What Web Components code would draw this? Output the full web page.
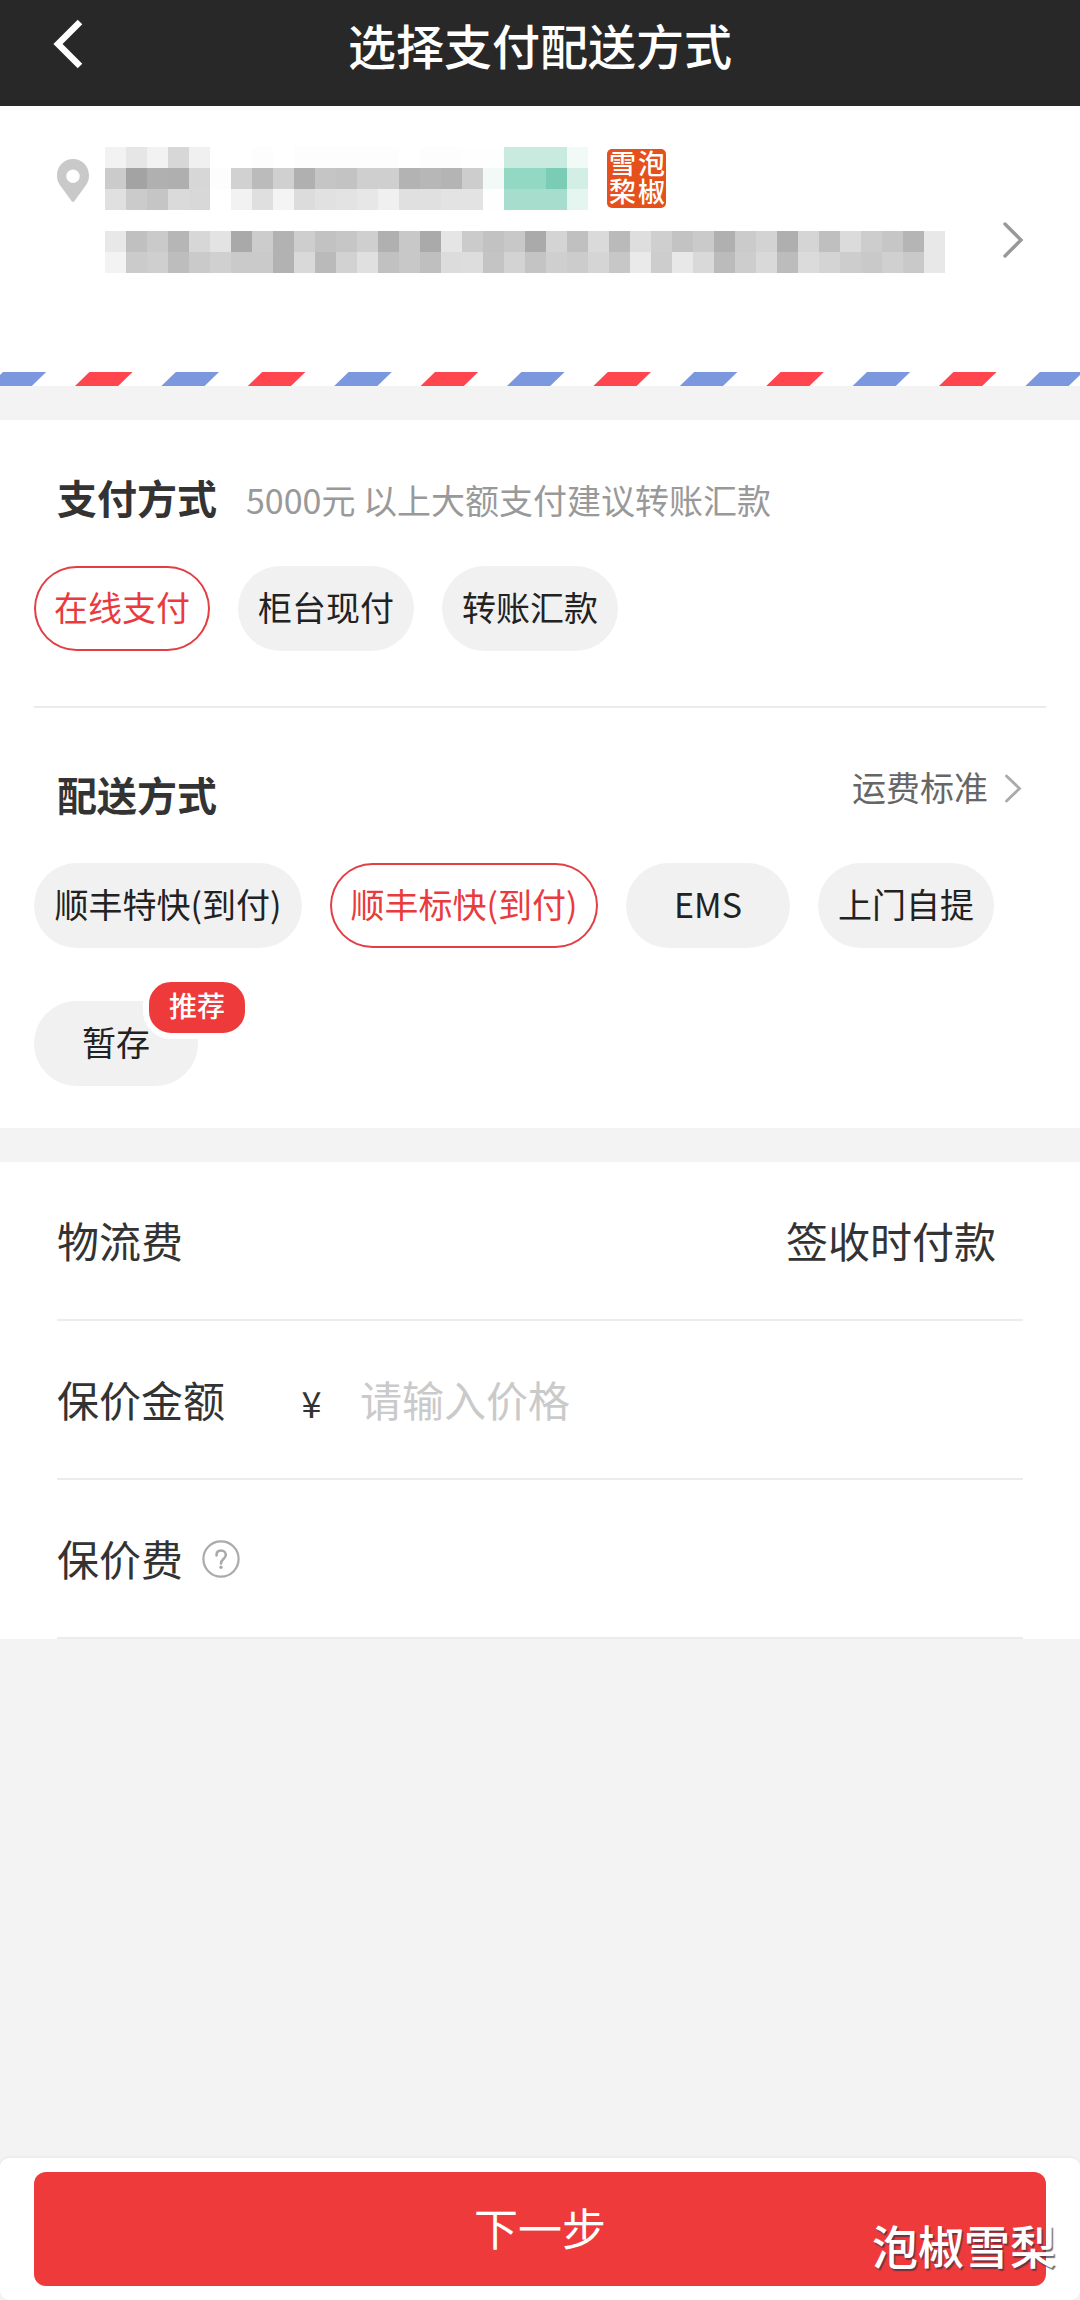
<!DOCTYPE html>
<html lang="zh-CN">
<head>
<meta charset="utf-8">
<title>选择支付配送方式</title>
<style>
html,body{margin:0;padding:0}
body{width:1080px;height:2300px;overflow:hidden;background:#f3f3f3;font-family:"Noto Sans CJK SC",sans-serif;color:#333}
</style>
</head>
<body>
<checkout-page></checkout-page>
<script>
const define = (name, html, setup) => customElements.define(name, class extends HTMLElement {
  connectedCallback() {
    if (this.shadowRoot) return;
    const t = document.createElement('template');
    t.innerHTML = html;
    this.attachShadow({mode: 'open'}).append(t.content.cloneNode(true));
    if (setup) setup(this, this.shadowRoot);
  }
});

define('nav-bar', `
<style>
:host{display:grid;grid-template-columns:120px 1fr 120px;height:106px;background:#282828;color:#fff;box-sizing:border-box;padding-bottom:18px;align-items:center}
svg{display:block;margin-left:50px}
h1{margin:0;font-size:48px;line-height:60px;font-weight:500;text-align:center;white-space:nowrap}
</style>
<svg width="36" height="56" viewBox="0 0 36 56"><path d="M30 6L8 28L30 50" fill="none" stroke="#fff" stroke-width="6.500"/></svg>
<h1><slot></slot></h1>`);

/* Redacted text: rows of 21px cells, two hex digits per grey, six per colour, "--" for blank */
define('pixel-mask', `
<style>:host{display:block;flex:none}svg{display:block}</style><svg shape-rendering="crispEdges"></svg>`, (el, root) => {
  const rows = el.getAttribute('rows').split('|').map(r => r.trim().split(/\s+/));
  const n = Math.max(...rows.map(r => r.length)), svg = root.querySelector('svg');
  svg.setAttribute('width', n * 21);
  svg.setAttribute('height', rows.length * 21);
  svg.innerHTML = rows.map((r, y) => r.map((c, x) => c === '--' ? '' :
    `<rect x="${x * 21}" y="${y * 21}" width="21" height="21" fill="#${c.length === 2 ? c + c + c : c}"/>`).join('')).join('');
});

define('seal-stamp', `
<style>
:host{display:grid;flex:none;grid-template-columns:29px 29px;grid-template-rows:28px 28px;width:59px;height:59px;box-sizing:border-box;padding:1px 0 0 1px;background:#e5501b;border-radius:5px;color:#fff;font-size:27px;line-height:26px;font-weight:500;text-align:center}
</style><span>雪</span><span>泡</span><span>棃</span><span>椒</span>`);

define('address-card', `
<style>
:host{display:flex;height:266px;background:#fff;box-sizing:border-box;padding:41px 50px 0 57px}
:host>*{flex:none}
.pin{display:block;flex:none;margin-top:12px;width:32px;height:44px}
.info{flex:none;margin-left:16px;width:840px}
.line{display:flex;height:84px;align-items:flex-start}
seal-stamp{margin:2px 0 0 19px}
.go{display:block;flex:none;margin:73px 0 0 56px}
</style>
<svg class="pin" viewBox="0 0 32 44"><path fill="#c9c9c9" fill-rule="evenodd" d="M16 0C7 0 0 7 0 16.500c0 5 1.500 7.500 4 11L14.500 42q1.500 2 3 0L28 27.500c2.500-3.500 4-6 4-11C32 7 25 0 16 0zM16 10.500a6.700 6.700 0 1 1 0 13.400a6.700 6.700 0 1 1 0-13.400z"/></svg>
<div class="info">
  <div class="line">
    <pixel-mask rows="f2 e6 f2 d7 f0 -- -- fd -- fd fd fd fd fd -- fd fd fe fe c9eadf c9eadf c9eadf f2faf7|cb a3 b0 af d7 fd d1 bb d0 b0 c5 c3 cf cf b3 b7 b4 cd f2f9f7 93d8c3 93d8c3 7accb4 d2eee5|e0 cb c5 da d8 -- f2 df f4 dc e1 e3 e7 f0 e0 e0 e3 e3 fe a6ddcc a6ddcc a6ddcc e5f5f0"></pixel-mask>
    <seal-stamp></seal-stamp>
  </div>
  <pixel-mask rows="e8 c0 ca b6 d7 e3 a9 cc b2 ce c2 c6 cf b0 c8 aa e5 cb c2 c8 aa d4 c0 da ba de cf c3 ca b0 cb d3 af d5 bf db cd c6 b5 e8|f3 cb cf bd ca d0 ca ca b2 d9 ba d2 e0 c1 c8 bf dc dd c4 d3 c4 cf cc d5 c7 ea cd e8 d9 bb cd d9 bc db d4 cd c9 d0 c9 e8"></pixel-mask>
</div>
<svg class="go" width="24" height="40" viewBox="0 0 24 40"><path d="M4 4L20 20L4 36" fill="none" stroke="#999" stroke-width="3.400" stroke-linecap="round"/></svg>`);

define('airmail-edge', `
<style>:host{display:block;height:14px;background:#fff}svg{display:block}</style>
<svg width="1080" height="14"></svg>`, (el, root) => {
  let s = '';
  for (let i = 0; i < 13; i++) {
    const x = -11.4 + i * 86.4;
    s += `<path fill="${i % 2 ? '#ff464e' : '#7b98de'}" d="M${x} 14L${x + 14.4} 0H${x + 57.6}L${x + 43.2} 14z"/>`;
  }
  root.querySelector('svg').innerHTML = s;
});

define('option-pill', `
<style>
:host{display:flex;position:relative;box-sizing:border-box;height:85px;min-width:164px;padding:0 20px 4px;border-radius:43px;background:#f1f1f1;color:#222;font-size:34px;line-height:50px;align-items:center;justify-content:center;white-space:nowrap}
:host([wide]){width:268px;padding-left:0;padding-right:0}
:host([selected]){background:#fff;color:#e93b3d;box-shadow:inset 0 0 0 2px #e23f45}
::slotted([slot=badge]){position:absolute;left:109px;top:-25px}
</style><slot></slot><slot name="badge"></slot>`);

define('hot-badge', `
<style>:host{display:block;box-sizing:border-box;width:108px;height:63px;border:6px solid #fff;border-radius:28px;background:#ee3a3a;color:#fff;font-size:28px;line-height:47px;font-weight:500;text-align:center}</style><slot></slot>`);

define('option-group', `
<style>
:host{display:block;box-sizing:border-box;padding:0 34px}
header{display:flex;align-items:center;padding:0 23px;height:60px}
h2{margin:0;font-size:40px;line-height:60px;font-weight:700;color:#333;white-space:nowrap}
.pills{display:flex;flex-wrap:wrap;gap:53px 28px;margin-top:39px}
</style>
<header><h2></h2><slot name="note"></slot></header>
<div class="pills"><slot></slot></div>`, (el, root) => root.querySelector('h2').textContent = el.getAttribute('heading'));

define('fee-link', `
<style>:host{display:flex;align-items:center;margin-left:auto;margin-right:-2px;font-size:34px;line-height:50px;color:#666;transform:translateY(-7px)}svg{display:block;margin:1px 2px 0 15px}</style>
<slot></slot><svg width="20" height="32" viewBox="0 0 20 32"><path d="M3.500 4L16.500 16.500L3.500 29" fill="none" stroke="#aaa" stroke-width="2.800" stroke-linecap="round"/></svg>`);

define('form-row', `
<style>
:host{display:flex;align-items:center;box-sizing:border-box;height:159px;margin:0 57px;padding-bottom:2px;border-bottom:2px solid #ececec;font-size:42px;line-height:60px;color:#333;white-space:nowrap}
::slotted([slot=end]){margin-left:auto;margin-right:27px}
</style><slot></slot><slot name="end"></slot>`);

define('help-icon', `
<style>:host{display:block;margin:2px 0 0 19px}svg{display:block}</style>
<svg width="38" height="38" viewBox="0 0 38 38" fill="none" stroke="#aaa" stroke-width="2.200"><circle cx="19" cy="19" r="17.600"/><path d="M14.500 15.500C14.500 12.300 16 10.500 19 10.500s4.800 2 4.800 4.600c0 3.900-4.800 4.100-4.800 8.400" stroke-width="2.600" stroke-linecap="round"/><circle cx="19" cy="27.300" r="1.700" fill="#aaa" stroke="none"/></svg>`);

define('submit-bar', `
<style>
:host{display:block;box-sizing:border-box;height:142px;padding:14px 34px;background:#fff;border-radius:9px;box-shadow:0 -1px 3px rgba(0,0,0,.06)}
button{display:block;width:100%;height:114px;border:0;border-radius:12px;padding:0 0 5px;background:#ee3a3a;color:#fff;font:400 44px/60px "Noto Sans CJK SC",sans-serif}
</style><button><slot></slot></button>`);

define('water-mark', `
<style>:host{display:block;position:absolute;left:872px;top:2214px;font-size:46px;line-height:60px;font-weight:500;color:#fff;white-space:nowrap;text-shadow:1.5px 1.5px 1px rgba(50,50,70,.7)}</style><slot></slot>`);

define('checkout-page', `
<style>
:host{display:flex;flex-direction:column;position:relative;width:1080px;height:2300px;background:#f3f3f3;overflow:hidden}
.options{background:#fff;margin-top:34px;height:708px;display:flex;flex-direction:column}
option-group.pay{height:231px;padding-top:48px}
option-group.ship{height:378px;padding-top:56px}
option-group.pay{padding-top:47px}
hr{margin:55px 34px 0;border:0;height:2px;background:#ebebeb;flex:none}
.hint{font-size:34px;line-height:50px;color:#999;margin:5px 0 0 29px;white-space:nowrap}
.fees{background:#fff;margin-top:34px}
.yen{font-size:36px;margin:6px 0 0 66px;width:41px;text-align:center}
.ph{color:#cacaca;margin-left:28px}
submit-bar{margin-top:auto}
</style>
<nav-bar>选择支付配送方式</nav-bar>
<address-card></address-card>
<airmail-edge></airmail-edge>
<div class="options">
  <option-group class="pay" heading="支付方式">
    <span slot="note" class="hint">5000元 以上大额支付建议转账汇款</span>
    <option-pill selected>在线支付</option-pill><option-pill>柜台现付</option-pill><option-pill>转账汇款</option-pill>
  </option-group>
  <hr>
  <option-group class="ship" heading="配送方式">
    <fee-link slot="note">运费标准</fee-link>
    <option-pill wide>顺丰特快(到付)</option-pill><option-pill wide selected>顺丰标快(到付)</option-pill><option-pill>EMS</option-pill><option-pill>上门自提</option-pill>
    <option-pill>暂存<hot-badge slot="badge">推荐</hot-badge></option-pill>
  </option-group>
</div>
<div class="fees">
  <form-row>物流费<span slot="end">签收时付款</span></form-row>
  <form-row>保价金额<span class="yen">¥</span><span class="ph">请输入价格</span></form-row>
  <form-row>保价费<help-icon></help-icon></form-row>
</div>
<submit-bar>下一步</submit-bar>
<water-mark>泡椒雪梨</water-mark>`);
</script>
</body>
</html>
